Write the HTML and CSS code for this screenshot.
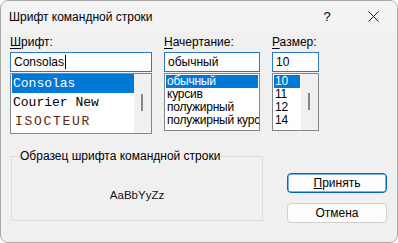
FILE: index.html
```html
<!DOCTYPE html>
<html lang="ru">
<head>
    <meta charset="UTF-8">
    <title>Шрифт командной строки</title>
    <link rel="stylesheet" href="styles.css">
</head>
<body>
    <div class="window">
        <div class="titlebar">
            <span class="title">Шрифт командной строки</span>
            <span class="help">?</span>
            <span class="close">
                <svg width="11" height="11" viewBox="0 0 11 11">
                    <path d="M0.5 0.5 L10.5 10.5 M10.5 0.5 L0.5 10.5" stroke="#1a1a1a" stroke-width="1" fill="none"/>
                </svg>
            </span>
        </div>

        <div class="content">
            <div class="pickers">
                <!-- Шрифт -->
                <div class="field field-font">
                    <label class="label"><u>Ш</u>рифт:</label>
                    <div class="edit">Consolas<span class="caret"></span></div>
                    <div class="list list-font">
                        <div class="rows">
                            <div class="row selected">Consolas</div>
                            <div class="row">Courier New</div>
                            <div class="row isocteur">ISOCTEUR</div>
                        </div>
                        <div class="scrollbar"><div class="thumb thumb-font"></div></div>
                    </div>
                </div>

                <!-- Начертание -->
                <div class="field field-style">
                    <label class="label"><u>Н</u>ачертание:</label>
                    <div class="edit">обычный</div>
                    <div class="list list-small">
                        <div class="rows">
                            <div class="row selected">обычный</div>
                            <div class="row">курсив</div>
                            <div class="row">полужирный</div>
                            <div class="row">полужирный курс</div>
                        </div>
                    </div>
                </div>

                <!-- Размер -->
                <div class="field field-size">
                    <label class="label"><u>Р</u>азмер:</label>
                    <div class="edit">10</div>
                    <div class="list list-small">
                        <div class="rows">
                            <div class="row selected">10</div>
                            <div class="row">11</div>
                            <div class="row">12</div>
                            <div class="row">14</div>
                        </div>
                        <div class="scrollbar"><div class="thumb thumb-size"></div></div>
                    </div>
                </div>
            </div>

            <div class="bottom">
                <fieldset class="sample">
                    <legend>Образец шрифта командной строки</legend>
                    <div class="sample-text">AaBbYyZz</div>
                </fieldset>

                <div class="buttons">
                    <button class="btn btn-default"><u>П</u>ринять</button>
                    <button class="btn">Отмена</button>
                </div>
            </div>
        </div>
    </div>
</body>
</html>
```

FILE: styles.css
```css
body {
    margin: 0;
    background: #ffffff;
    font-family: "Liberation Sans", Arial, sans-serif;
    font-size: 12px;
    color: #000;
}
.window {
    width: 398px;
    height: 243px;
    box-sizing: border-box;
    border: 1px solid #a8a8a8;
    border-radius: 8px;
    background: #f0f0f0;
    overflow: hidden;
}
.titlebar {
    height: 30px;
    display: flex;
    align-items: center;
    padding-left: 8px;
    background: #f3f3f3;
}
.title {
    flex: 1;
    font-size: 12px;
    margin-top: 1px;
}
.help {
    width: 46px;
    text-align: center;
    font-size: 13px;
}
.close {
    width: 46px;
    display: flex;
    justify-content: center;
    margin-right: 1px;
}
.content {
    padding: 4px 0 0 9px;
}
.pickers {
    display: flex;
    gap: 12px;
}
.field {
    display: flex;
    flex-direction: column;
}
.field-font { width: 142px; }
.field-style { width: 96px; }
.field-size { width: 47px; }
.label {
    height: 15px;
    line-height: 15px;
    margin-bottom: 2px;
}
.label u {
    text-underline-offset: 2px;
}
.edit {
    height: 20px;
    box-sizing: border-box;
    border: 1px solid #2b79c9;
    background: #fff;
    padding: 0 3px;
    line-height: 18px;
    display: flex;
    align-items: center;
}
.caret {
    width: 1px;
    height: 14px;
    background: #000;
    margin-left: 1px;
}
.list {
    margin-top: 1px;
    display: flex;
    border: 1px solid #82878f;
    background: #fff;
}
.rows {
    flex: 1;
    padding: 1px;
    overflow: hidden;
}
.list-font {
    height: 59px;
}
.list-font .rows {
    padding: 0 0 0 1px;
    font-family: "Liberation Mono", "Courier New", monospace;
    font-size: 13px;
}
.list-font .row {
    height: 19px;
    line-height: 19px;
    padding-left: 1px;
}
.isocteur {
    letter-spacing: 1.7px;
    color: #5a2a10;
    padding-left: 3px !important;
}
.list-small {
    height: 56px;
    font-size: 12px;
    letter-spacing: -0.25px;
}
.list-small .row {
    height: 13px;
    line-height: 13px;
    padding-left: 1px;
    white-space: nowrap;
}
.row.selected {
    background: #0078d7;
    color: #fff;
}
.scrollbar {
    width: 17px;
    background: #f0f0f0;
    position: relative;
}
.thumb {
    position: absolute;
    left: 7px;
    width: 2px;
    height: 17px;
    background: #858585;
}
.thumb-font { top: 20px; }
.thumb-size { top: 19px; }
.bottom {
    display: flex;
    margin-top: 15px;
}
.sample {
    width: 252px;
    height: 72px;
    box-sizing: border-box;
    margin: 0 0 0 1px;
    padding: 0;
    border: 1px solid #dcdcdc;
    display: flex;
    align-items: center;
    justify-content: center;
}
.sample legend {
    font-size: 12px;
    padding: 0 1px;
    margin-left: 7px;
}
.sample-text {
    font-size: 11.5px;
    margin-top: 6px;
    color: #101010;
}
.buttons {
    display: flex;
    flex-direction: column;
    gap: 10px;
    margin-left: 24px;
    padding-top: 24px;
}
.btn {
    width: 100px;
    height: 20px;
    box-sizing: border-box;
    border: 1px solid #d0d0d0;
    border-radius: 4px;
    background: #fdfdfd;
    font-family: "Liberation Sans", Arial, sans-serif;
    font-size: 12px;
    padding: 0;
    color: #000;
}
.btn-default {
    border-color: #0067c0;
    box-shadow: inset 0 0 0 0.5px #0067c0;
}
```
